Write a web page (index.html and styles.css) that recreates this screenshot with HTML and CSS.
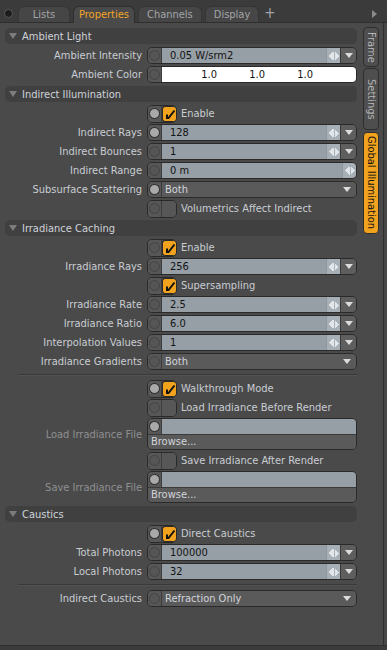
FILE: index.html
```html
<!DOCTYPE html>
<html lang="en">
<head>
    <meta charset="UTF-8">
    <title>Properties - Global Illumination</title>
    <link rel="stylesheet" href="styles.css">
</head>
<body>
<div class="app">
    <div class="tabbar">
        <span class="tab-icon"></span>
        <span class="tab">Lists</span>
        <span class="tab active">Properties</span>
        <span class="tab">Channels</span>
        <span class="tab">Display</span>
        <span class="tab-add">+</span>
        <svg class="tab-more" width="5" height="8" viewBox="0 0 5 8"><path d="M0 0L5 4L0 8Z" fill="#8a8a8a"/></svg>
    </div>

    <div class="main">
        <div class="panel">
            <!-- Ambient Light -->
            <div class="section-head"><span class="tri"></span>Ambient Light</div>
            <div class="rows">
                <div class="row">
                    <span class="lbl">Ambient Intensity</span>
                    <div class="ctl"><span class="dot"></span><span class="val">0.05 W/srm2</span><span class="spin"></span><span class="drop"></span></div>
                </div>
                <div class="row">
                    <span class="lbl">Ambient Color</span>
                    <div class="ctl"><span class="dot"></span><span class="val color"><span>1.0</span><span>1.0</span><span>1.0</span></span></div>
                </div>
            </div>

            <!-- Indirect Illumination -->
            <div class="section-head"><span class="tri"></span>Indirect Illumination</div>
            <div class="rows">
                <div class="row">
                    <span class="lbl"></span>
                    <div class="check"><div class="toggle"><span class="dot lit"></span><span class="box on"></span></div>Enable</div>
                </div>
                <div class="row">
                    <span class="lbl">Indirect Rays</span>
                    <div class="ctl"><span class="dot lit"></span><span class="val">128</span><span class="spin"></span><span class="drop"></span></div>
                </div>
                <div class="row">
                    <span class="lbl">Indirect Bounces</span>
                    <div class="ctl"><span class="dot"></span><span class="val">1</span><span class="spin"></span><span class="drop"></span></div>
                </div>
                <div class="row">
                    <span class="lbl">Indirect Range</span>
                    <div class="ctl"><span class="dot"></span><span class="val">0 m</span><span class="spin"></span></div>
                </div>
                <div class="row">
                    <span class="lbl">Subsurface Scattering</span>
                    <div class="ctl"><span class="dot lit"></span><span class="sel">Both</span><span class="sel-arrow"></span></div>
                </div>
                <div class="row">
                    <span class="lbl"></span>
                    <div class="check"><div class="toggle"><span class="dot"></span><span class="box"></span></div>Volumetrics Affect Indirect</div>
                </div>
            </div>

            <!-- Irradiance Caching -->
            <div class="section-head"><span class="tri"></span>Irradiance Caching</div>
            <div class="rows">
                <div class="row">
                    <span class="lbl"></span>
                    <div class="check"><div class="toggle"><span class="dot"></span><span class="box on"></span></div>Enable</div>
                </div>
                <div class="row">
                    <span class="lbl">Irradiance Rays</span>
                    <div class="ctl"><span class="dot"></span><span class="val">256</span><span class="spin"></span><span class="drop"></span></div>
                </div>
                <div class="row">
                    <span class="lbl"></span>
                    <div class="check"><div class="toggle"><span class="dot"></span><span class="box on"></span></div>Supersampling</div>
                </div>
                <div class="row">
                    <span class="lbl">Irradiance Rate</span>
                    <div class="ctl"><span class="dot"></span><span class="val">2.5</span><span class="spin"></span><span class="drop"></span></div>
                </div>
                <div class="row">
                    <span class="lbl">Irradiance Ratio</span>
                    <div class="ctl"><span class="dot"></span><span class="val">6.0</span><span class="spin"></span><span class="drop"></span></div>
                </div>
                <div class="row">
                    <span class="lbl">Interpolation Values</span>
                    <div class="ctl"><span class="dot"></span><span class="val">1</span><span class="spin"></span><span class="drop"></span></div>
                </div>
                <div class="row">
                    <span class="lbl">Irradiance Gradients</span>
                    <div class="ctl"><span class="dot"></span><span class="sel">Both</span><span class="sel-arrow"></span></div>
                </div>

                <div class="sep"></div>

                <div class="row">
                    <span class="lbl"></span>
                    <div class="check"><div class="toggle"><span class="dot lit"></span><span class="box on"></span></div>Walkthrough Mode</div>
                </div>
                <div class="row">
                    <span class="lbl"></span>
                    <div class="check"><div class="toggle"><span class="dot"></span><span class="box"></span></div>Load Irradiance Before Render</div>
                </div>
                <div class="row tall">
                    <span class="lbl dim">Load Irradiance File</span>
                    <div class="file">
                        <div class="file-top"><span class="dot lit"></span><span class="val"></span></div>
                        <div class="browse">Browse...</div>
                    </div>
                </div>
                <div class="row">
                    <span class="lbl"></span>
                    <div class="check"><div class="toggle"><span class="dot"></span><span class="box"></span></div>Save Irradiance After Render</div>
                </div>
                <div class="row tall">
                    <span class="lbl dim">Save Irradiance File</span>
                    <div class="file">
                        <div class="file-top"><span class="dot lit"></span><span class="val"></span></div>
                        <div class="browse">Browse...</div>
                    </div>
                </div>
            </div>

            <!-- Caustics -->
            <div class="section-head"><span class="tri"></span>Caustics</div>
            <div class="rows">
                <div class="row">
                    <span class="lbl"></span>
                    <div class="check"><div class="toggle"><span class="dot lit"></span><span class="box on"></span></div>Direct Caustics</div>
                </div>
                <div class="row">
                    <span class="lbl">Total Photons</span>
                    <div class="ctl"><span class="dot"></span><span class="val">100000</span><span class="spin"></span><span class="drop"></span></div>
                </div>
                <div class="row">
                    <span class="lbl">Local Photons</span>
                    <div class="ctl"><span class="dot"></span><span class="val">32</span><span class="spin"></span><span class="drop"></span></div>
                </div>

                <div class="sep"></div>

                <div class="row">
                    <span class="lbl">Indirect Caustics</span>
                    <div class="ctl"><span class="dot"></span><span class="sel">Refraction Only</span><span class="sel-arrow"></span></div>
                </div>
            </div>
        </div>

        <div class="sidetabs">
            <span class="vtab frame">Frame</span>
            <span class="vtab settings">Settings</span>
            <span class="vtab gi active">Global Illumination</span>
        </div>
    </div>
    <div class="footer"></div>
</div>
</body>
</html>
```

FILE: styles.css
```css
* {
    box-sizing: border-box;
}

body {
    margin: 0;
    background: #3b3b3b;
    font-family: "DejaVu Sans Condensed", "DejaVu Sans", sans-serif;
    font-stretch: condensed;
    font-size: 11px;
    color: #c9cdd3;
}

.app {
    width: 387px;
    height: 650px;
    display: flex;
    flex-direction: column;
    overflow: hidden;
}

/* top tab strip */
.tabbar {
    height: 22px;
    flex: none;
    display: flex;
    align-items: flex-end;
    padding-left: 4px;
    position: relative;
    z-index: 1;
}

.tab-icon {
    width: 9px;
    height: 9px;
    border-radius: 50%;
    background: #1c1c1c;
    border: 1px solid #5a5a5a;
    margin: 0 5px 4px 0;
}

.tab {
    height: 16px;
    min-width: 52px;
    padding: 0 8px;
    margin-right: 3px;
    line-height: 15px;
    text-align: center;
    color: #a3a5a8;
    background: #464646;
    border: 1px solid #353535;
    border-bottom: none;
    border-radius: 6px 6px 0 0;
}

.tab.active {
    height: 17px;
    margin-bottom: -1px;
    padding: 0 5px;
    color: #f4a326;
    background: #4a4a4a;
    border-color: #2e2e2e;
}

.tab-add {
    font-size: 15px;
    color: #a3a5a8;
    line-height: 18px;
    margin-left: 2px;
}

.tab-more {
    position: absolute;
    right: 10px;
    top: 10px;
}

/* main area */
.main {
    flex: 1;
    display: flex;
    background: #4a4a4a;
    border-top: 1px solid #2e2e2e;
}

.panel {
    width: 361px;
    padding: 5px 4px 0 5px;
}

.section-head {
    height: 16px;
    background: #404040;
    border-radius: 5px;
    display: flex;
    align-items: center;
    padding-left: 4px;
    color: #cfd3d9;
    margin-bottom: 2px;
}

.tri {
    width: 0;
    height: 0;
    border-left: 4px solid transparent;
    border-right: 4px solid transparent;
    border-top: 6px solid #7c7c7c;
    margin-right: 5px;
}

.rows {
    margin-bottom: 2px;
}

.row {
    display: grid;
    grid-template-columns: 142px 210px;
    align-items: center;
    height: 19px;
}

.row.tall {
    height: 34px;
}

.lbl {
    text-align: right;
    padding-right: 5px;
    white-space: nowrap;
}

.lbl.dim {
    color: #8e8f91;
}

/* generic field */
.ctl {
    height: 17px;
    display: flex;
    border: 1px solid #2a2a2a;
    border-radius: 5px;
    overflow: hidden;
}

.dot {
    width: 14px;
    flex: none;
    background: #575757;
    border-right: 1px solid #3c3c3c;
    display: flex;
    align-items: center;
    justify-content: center;
}

.dot::before {
    content: "";
    width: 9px;
    height: 9px;
    border-radius: 50%;
    background: #555555;
    border: 1px solid #454545;
}

.dot.lit::before {
    background: #a9a9a9;
    border-color: #262626;
}

.val {
    flex: 1;
    background: #969ea6;
    color: #141414;
    padding-left: 8px;
    line-height: 15px;
}

.val.color {
    background: #ffffff;
    display: grid;
    grid-template-columns: 48px 48px 48px;
    padding-left: 7px;
}

.val.color span {
    text-align: right;
}

.spin {
    width: 14px;
    flex: none;
    background: #a7afb7;
    border-left: 1px solid #8d959d;
    display: flex;
    align-items: center;
    justify-content: center;
}

.spin::before {
    content: "";
    width: 4px;
    height: 8px;
    border-right: 1px solid #e2e6ea;
    margin-right: 1px;
    background:
        linear-gradient(to bottom right, transparent 50%, #e2e6ea 50%) top/4px 4px no-repeat,
        linear-gradient(to top right, transparent 50%, #e2e6ea 50%) bottom/4px 4px no-repeat;
}

.spin::after {
    content: "";
    width: 4px;
    height: 8px;
    background:
        linear-gradient(to bottom left, transparent 50%, #e2e6ea 50%) top/4px 4px no-repeat,
        linear-gradient(to top left, transparent 50%, #e2e6ea 50%) bottom/4px 4px no-repeat;
}

.drop {
    width: 16px;
    flex: none;
    background: #5e5e5e;
    border-left: 1px solid #3a3a3a;
    display: flex;
    align-items: center;
    justify-content: center;
}

.drop::before,
.sel-arrow::before {
    content: "";
    width: 0;
    height: 0;
    border-left: 4px solid transparent;
    border-right: 4px solid transparent;
    border-top: 5px solid #dcdcdc;
}

.sel {
    flex: 1;
    background: #5a5a5a;
    color: #d2d5da;
    padding-left: 3px;
    line-height: 15px;
}

.sel-arrow {
    width: 18px;
    flex: none;
    background: #5a5a5a;
    display: flex;
    align-items: center;
    justify-content: center;
}

/* checkbox rows */
.check {
    display: flex;
    align-items: center;
    gap: 4px;
    white-space: nowrap;
}

.toggle {
    width: 30px;
    height: 18px;
    display: flex;
    border: 1px solid #2a2a2a;
    border-radius: 5px;
    overflow: hidden;
    background: #575757;
}

.box {
    flex: 1;
    background: #575757;
}

.box.on {
    background: #f2a31e;
    border-radius: 3px;
    border: 1px solid #2a2a2a;
    border-right: none;
    background-image: url("data:image/svg+xml,%3Csvg xmlns='http://www.w3.org/2000/svg' width='12' height='12' viewBox='0 0 12 12'%3E%3Cpath d='M3 6.5V10H4.5L10.5 2.5' stroke='%23111' stroke-width='2' fill='none'/%3E%3C/svg%3E");
    background-repeat: no-repeat;
    background-position: center;
}

/* file pickers */
.file {
    height: 32px;
    border: 1px solid #2a2a2a;
    border-radius: 5px;
    overflow: hidden;
    display: flex;
    flex-direction: column;
}

.file-top {
    height: 16px;
    display: flex;
    border-bottom: 1px solid #3a3a3a;
}

.browse {
    flex: 1;
    background: #5a5a5a;
    color: #d2d5da;
    padding-left: 3px;
    line-height: 14px;
}

.sep {
    height: 8px;
    margin-left: 13px;
    margin-right: 0;
    padding-top: 3px;
}

.sep::before {
    content: "";
    display: block;
    height: 1px;
    background: #393939;
    box-shadow: 0 1px 0 #525252;
}

/* vertical tabs on the right */
.sidetabs {
    width: 26px;
    padding: 4px 0 0 2px;
    display: flex;
    flex-direction: column;
    gap: 1px;
    border-right: 3px solid #474747;
    box-shadow: inset -1px 0 0 #2e2e2e;
}

.vtab {
    width: 16px;
    writing-mode: vertical-rl;
    display: flex;
    align-items: center;
    justify-content: center;
    background: #4e4e4e;
    border: 1px solid #2e2e2e;
    border-radius: 4px;
    color: #b3b5b8;
}

.vtab.frame {
    height: 40px;
}

.vtab.settings {
    height: 62px;
}

.vtab.gi {
    height: 102px;
    margin-top: 1px;
}

.vtab.active {
    background: #f2a31e;
    color: #111111;
}

.footer {
    height: 5px;
    flex: none;
    border-top: 1px solid #2e2e2e;
    background: #3b3b3b;
}
```
